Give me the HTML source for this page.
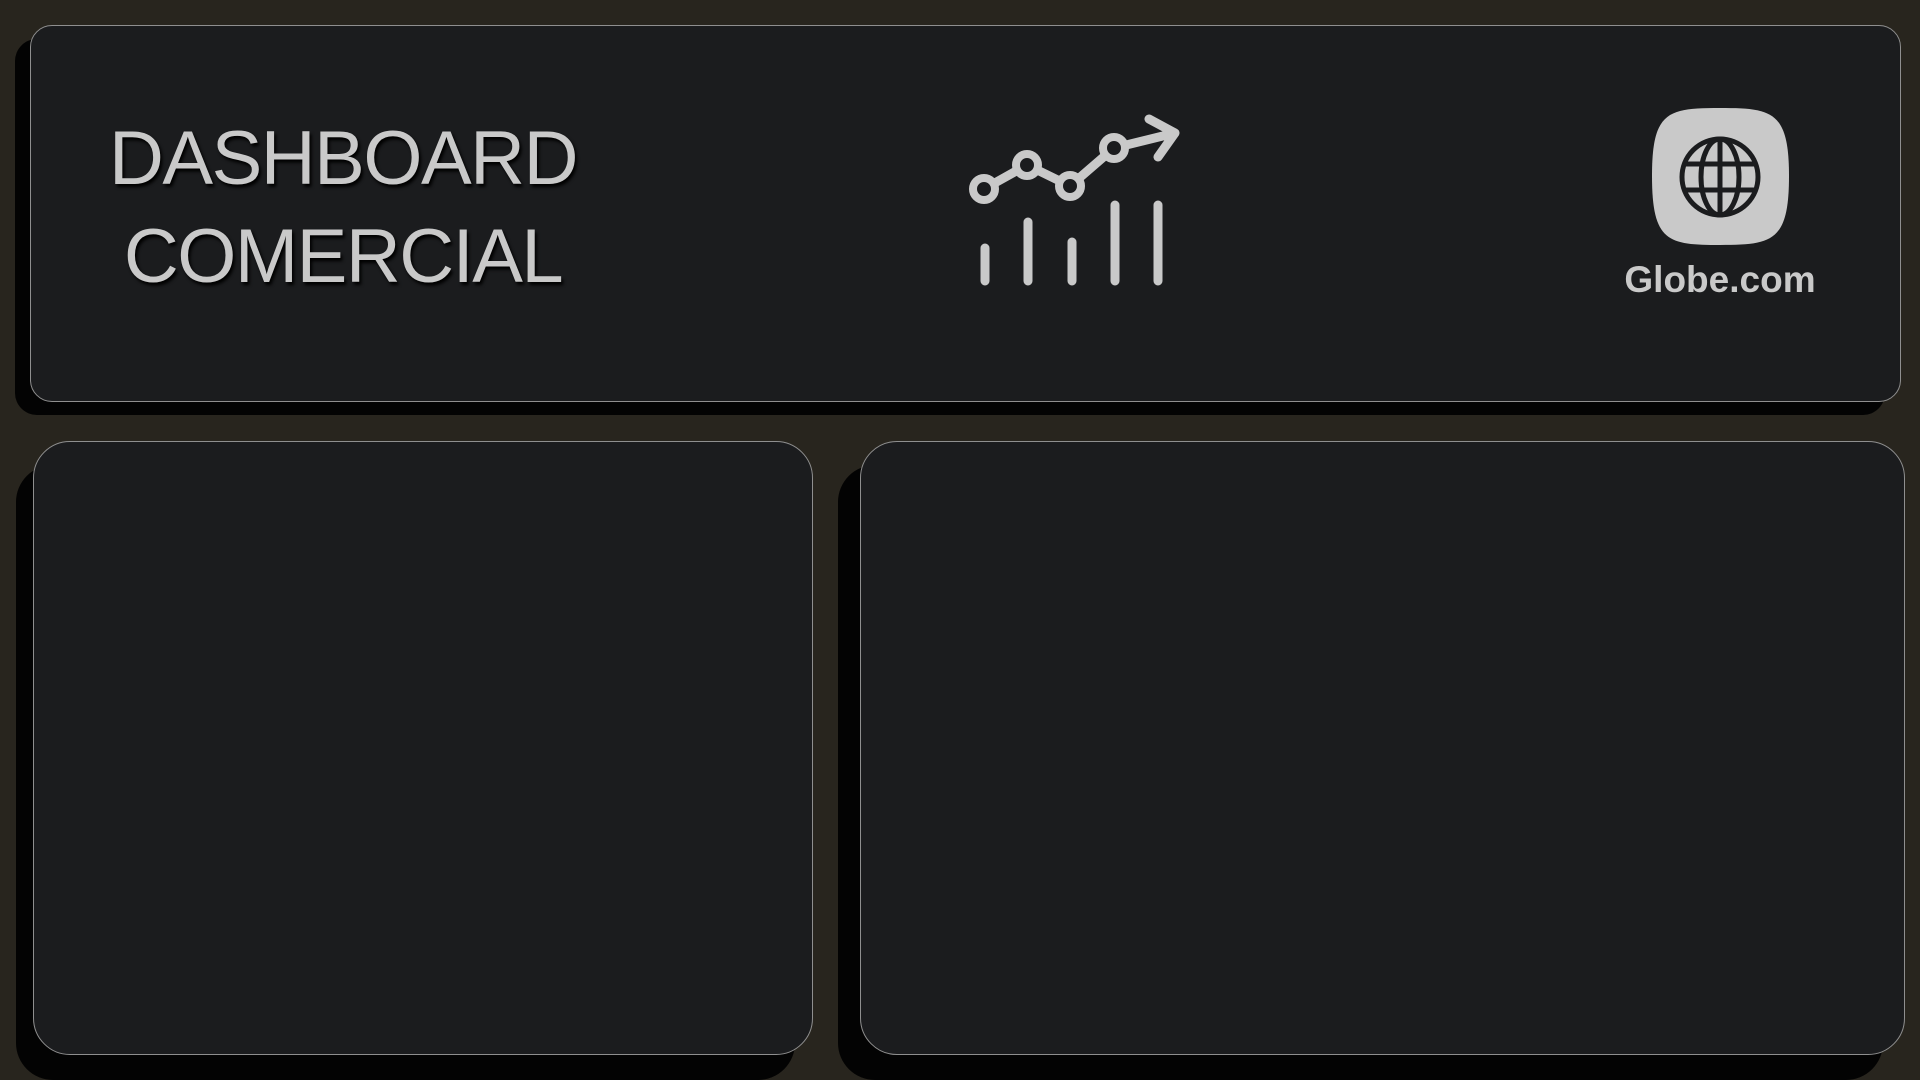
<!DOCTYPE html>
<html><head><style>
html,body{margin:0;padding:0}
body{width:1920px;height:1080px;background:#28251e;position:relative;overflow:hidden;font-family:"Liberation Sans",sans-serif}
.c{position:absolute;background:#1b1c1e;border:1.5px solid #8f8f8f;box-sizing:border-box}
.s{position:absolute;background:#030303}
.t{position:absolute;color:#c9c9c9;font-size:76px;text-align:center;width:700px;left:-7px;line-height:98px;text-shadow:2px 3px 3px #000;letter-spacing:-1.5px}
</style></head><body>
<div class="s" style="left:15px;top:39px;width:1870px;height:376px;border-radius:22px"></div>
<div class="c" style="left:30px;top:25px;width:1871px;height:377px;border-radius:22px"></div>
<div class="s" style="left:16px;top:465px;width:779px;height:615px;border-radius:37px"></div>
<div class="c" style="left:33px;top:441px;width:780px;height:614px;border-radius:37px"></div>
<div class="s" style="left:838px;top:465px;width:1045px;height:615px;border-radius:37px"></div>
<div class="c" style="left:860px;top:441px;width:1045px;height:614px;border-radius:37px"></div>
<div class="t" style="top:110px">DASHBOARD<br>COMERCIAL</div>
<svg style="position:absolute;left:0;top:0" width="1920" height="1080">
<g stroke="#c9c9c9" stroke-width="9" fill="none" stroke-linecap="round" stroke-linejoin="round">
<path d="M984 189L1027 165L1070 186L1114 148L1175 133M1149 119L1175 133L1158 157"/>
<path d="M985 281V248M1028 281V222M1072 281V242M1115 281V205M1158 281V205"/>
</g>
<g fill="#1b1c1e" stroke="#c9c9c9" stroke-width="8">
<circle cx="984" cy="189" r="11"/><circle cx="1027" cy="165" r="11"/><circle cx="1070" cy="186" r="11"/><circle cx="1114" cy="148" r="11"/>
</g>
<path d="M1720 108C1772 108 1789 111 1789 176C1789 242 1772 245 1720 245C1668 245 1652 242 1652 176C1652 111 1668 108 1720 108Z" fill="#c9c9c9"/>
<g stroke="#1b1c1e" stroke-width="5" fill="none">
<circle cx="1720" cy="177" r="38"/>
<ellipse cx="1720" cy="177" rx="19" ry="38"/>
<path d="M1720 139V215M1684 164H1756M1684 190H1756"/>
</g>
<text x="1720" y="292" fill="#c9c9c9" font-family="Liberation Sans" font-weight="bold" font-size="37" text-anchor="middle">Globe.com</text>
</svg>
</body></html>
